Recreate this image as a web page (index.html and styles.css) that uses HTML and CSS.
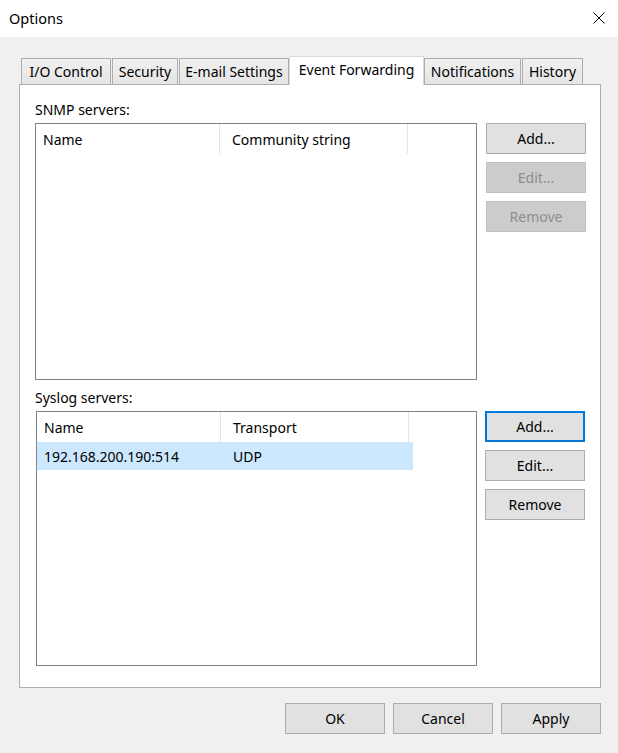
FILE: index.html
```html
<!DOCTYPE html>
<html>
<head>
<meta charset="utf-8">
<title>Options</title>
<link rel="stylesheet" href="styles.css">
</head>
<body>
<div class="window">
  <div class="titlebar">
    <span class="title">Options</span>
    <svg class="close" width="12" height="12" viewBox="0 0 12 12"><path d="M0.5 0.5 L11.5 11.5 M11.5 0.5 L0.5 11.5" stroke="#000" stroke-width="1" fill="none"/></svg>
  </div>
  <div class="client">
    <div class="tabs">
      <div class="tab t-io">I/O Control</div>
      <div class="tab t-sec">Security</div>
      <div class="tab t-mail">E-mail Settings</div>
      <div class="tab tab-active t-ef">Event Forwarding</div>
      <div class="tab t-not">Notifications</div>
      <div class="tab t-his">History</div>
    </div>
    <div class="panel">
      <section class="group">
        <div class="label">SNMP servers:</div>
        <div class="group-row">
          <div class="list list-snmp">
            <div class="list-header">
              <div class="col col1">Name</div>
              <div class="col col2">Community string</div>
            </div>
          </div>
          <div class="btn-col">
            <button class="btn">Add...</button>
            <button class="btn btn-disabled">Edit...</button>
            <button class="btn btn-disabled">Remove</button>
          </div>
        </div>
      </section>
      <section class="group group-syslog">
        <div class="label">Syslog servers:</div>
        <div class="group-row row-syslog">
          <div class="list list-syslog">
            <div class="list-header">
              <div class="col col1">Name</div>
              <div class="col col2">Transport</div>
            </div>
            <div class="list-row selected">
              <div class="cell cell1">192.168.200.190:514</div>
              <div class="cell cell2">UDP</div>
            </div>
          </div>
          <div class="btn-col">
            <button class="btn btn-focus">Add...</button>
            <button class="btn">Edit...</button>
            <button class="btn">Remove</button>
          </div>
        </div>
      </section>
    </div>
    <div class="footer">
      <button class="btn">OK</button>
      <button class="btn">Cancel</button>
      <button class="btn">Apply</button>
    </div>
  </div>
</div>
</body>
</html>
```
FILE: styles.css
```css
* { box-sizing: border-box; }
html, body {
  margin: 0;
  padding: 0;
}
body {
  width: 618px;
  height: 753px;
  background: #f0f0f0;
  font-family: "Noto Sans", "Open Sans", sans-serif;
  font-size: 14px;
  color: #000;
  overflow: hidden;
}
.window {
  width: 618px;
  height: 753px;
  display: flex;
  flex-direction: column;
}
.titlebar {
  height: 37px;
  background: #fff;
  display: flex;
  align-items: center;
  justify-content: space-between;
  padding: 0 13px 1px 9px;
}
.title {
  font-size: 14.5px;
  line-height: 20px;
}
.close { display: block; }

.client {
  padding: 19px 17px 0 19px;
  display: flex;
  flex-direction: column;
}
.tabs {
  height: 28px;
  display: flex;
  align-items: flex-end;
  padding-left: 2px;
}
.tab {
  height: 26px;
  border: 1px solid #adadad;
  border-bottom: none;
  background: linear-gradient(#f0f0f0, #e5e5e5);
  text-align: center;
  line-height: 25px;
  white-space: nowrap;
  margin-right: 1px;
}
.tab-active {
  height: 29px;
  margin-bottom: -1px;
  background: #fff;
  border-color: #d9d9d9;
  line-height: 26px;
  position: relative;
  z-index: 1;
  margin-right: 0;
}
.t-io { width: 90px; }
.t-sec { width: 66px; }
.t-mail { width: 110px; margin-right: 0; }
.t-ef { width: 135px; }
.t-not { width: 97px; }
.t-his { width: 61px; }

.panel {
  width: 582px;
  height: 604px;
  background: #fff;
  border: 1px solid #adadad;
  padding: 15px 0 0 15px;
  display: flex;
  flex-direction: column;
}
.group-syslog { margin-top: 8px; }
.label {
  height: 20px;
  line-height: 20px;
  margin-bottom: 3px;
}
.group-row {
  display: flex;
  align-items: flex-start;
  gap: 9px;
}
.row-syslog {
  padding-left: 1px;
  gap: 8px;
}
.list {
  border: 1px solid #828282;
  background: #fff;
}
.list-snmp { width: 442px; height: 257px; }
.list-syslog { width: 441px; height: 255px; }
.list-header {
  height: 30px;
  display: flex;
}
.col {
  height: 30px;
  line-height: 31px;
  border-right: 1px solid #e5e5e5;
  white-space: nowrap;
}
.col1 { width: 184px; padding-left: 7px; }
.col2 { width: 188px; padding-left: 12px; }
.list-row {
  height: 28px;
  width: 376px;
  display: flex;
  line-height: 29px;
}
.selected { background: #cce8ff; }
.cell1 { width: 184px; padding-left: 7px; }
.cell2 { padding-left: 12px; }

.btn-col {
  display: flex;
  flex-direction: column;
  gap: 8px;
}
.btn {
  width: 100px;
  height: 31px;
  background: #e1e1e1;
  border: 1px solid #adadad;
  font-family: inherit;
  font-size: 14px;
  color: #000;
  padding: 0;
  margin: 0;
  line-height: 28px;
}
.btn-disabled {
  background: #cccccc;
  border-color: #bfbfbf;
  color: #8d8d8d;
}
.btn-focus {
  border: 2px solid #0078d7;
}
.footer {
  margin-top: 15px;
  display: flex;
  justify-content: flex-end;
  gap: 8px;
  padding-right: 0;
  width: 582px;
}
```
